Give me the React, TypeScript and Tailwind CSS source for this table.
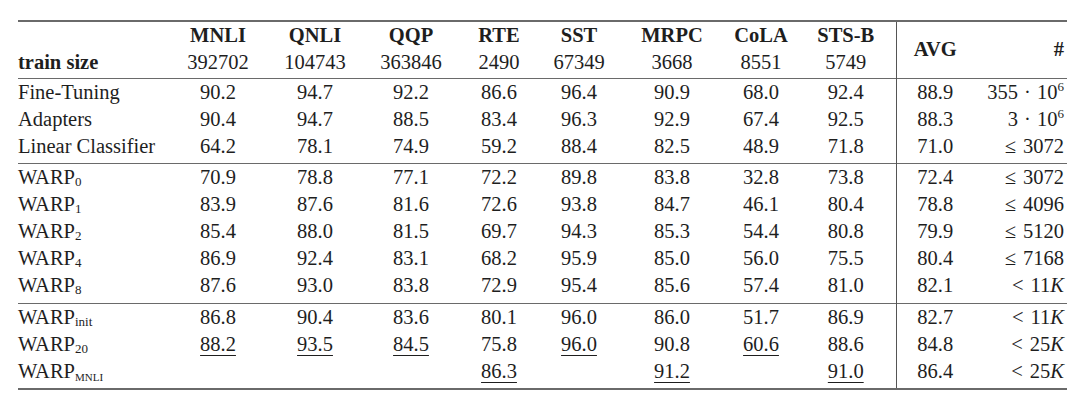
import type { ReactNode } from 'react'

interface Row { name: ReactNode; vals: string[]; avg: string; n: ReactNode }

const tasks = ['MNLI', 'QNLI', 'QQP', 'RTE', 'SST', 'MRPC', 'CoLA', 'STS-B']
const sizes = ['392702', '104743', '363846', '2490', '67349', '3668', '8551', '5749']

const Warp = ({ sub, small }: { sub: string; small?: boolean }) => (
  <>
    WARP
    <sub className={small ? 'text-[11px] -bottom-[3px]' : 'text-[13px] -bottom-[2px]'}>{sub}</sub>
  </>
)

const Le = ({ v }: { v: string }) => (
  <>
    <span className="mr-[7px]">≤</span>
    {v}
  </>
)

const Lt = ({ v }: { v: string }) => (
  <>
    <span className="mr-[7px]">&lt;</span>
    {v}
    <span className="italic">K</span>
  </>
)

const Pow = ({ b }: { b: string }) => (
  <>
    {b} <span className="mx-[1px]">·</span> 10
    <sup className="text-[13px] -top-[8px]">6</sup>
  </>
)

const groups: Row[][] = [
  [
    { name: 'Fine-Tuning', vals: ['90.2', '94.7', '92.2', '86.6', '96.4', '90.9', '68.0', '92.4'], avg: '88.9', n: <Pow b="355" /> },
    { name: 'Adapters', vals: ['90.4', '94.7', '88.5', '83.4', '96.3', '92.9', '67.4', '92.5'], avg: '88.3', n: <Pow b="3" /> },
    { name: 'Linear Classifier', vals: ['64.2', '78.1', '74.9', '59.2', '88.4', '82.5', '48.9', '71.8'], avg: '71.0', n: <Le v="3072" /> },
  ],
  [
    { name: <Warp sub="0" />, vals: ['70.9', '78.8', '77.1', '72.2', '89.8', '83.8', '32.8', '73.8'], avg: '72.4', n: <Le v="3072" /> },
    { name: <Warp sub="1" />, vals: ['83.9', '87.6', '81.6', '72.6', '93.8', '84.7', '46.1', '80.4'], avg: '78.8', n: <Le v="4096" /> },
    { name: <Warp sub="2" />, vals: ['85.4', '88.0', '81.5', '69.7', '94.3', '85.3', '54.4', '80.8'], avg: '79.9', n: <Le v="5120" /> },
    { name: <Warp sub="4" />, vals: ['86.9', '92.4', '83.1', '68.2', '95.9', '85.0', '56.0', '75.5'], avg: '80.4', n: <Le v="7168" /> },
    { name: <Warp sub="8" />, vals: ['87.6', '93.0', '83.8', '72.9', '95.4', '85.6', '57.4', '81.0'], avg: '82.1', n: <Lt v="11" /> },
  ],
  [
    { name: <Warp sub="init" />, vals: ['86.8', '90.4', '83.6', '80.1', '96.0', '86.0', '51.7', '86.9'], avg: '82.7', n: <Lt v="11" /> },
    { name: <Warp sub="20" />, vals: ['_88.2', '_93.5', '_84.5', '75.8', '_96.0', '90.8', '_60.6', '88.6'], avg: '84.8', n: <Lt v="25" /> },
    { name: <Warp sub="MNLI" small />, vals: ['', '', '', '_86.3', '', '_91.2', '', '_91.0'], avg: '86.4', n: <Lt v="25" /> },
  ],
]

const widths = ['w-[152px]', 'w-[96px]', 'w-[98px]', 'w-[94px]', 'w-[82px]', 'w-[78px]', 'w-[108px]', 'w-[70px]', 'w-[100px]', 'w-[78px]', 'w-[93px]']

function Val({ v }: { v: string }) {
  if (v.startsWith('_')) {
    return <span className="underline decoration-1 underline-offset-[4px]">{v.slice(1)}</span>
  }
  return <>{v}</>
}

export default function App() {
  return (
    <div className="w-[1080px] h-[409px] bg-white pt-[20px] pl-[18px] font-['Liberation_Serif',serif] text-[20.5px] text-[#1e1e1e]">
      <table className="table-fixed border-collapse w-[1049px]">
        <colgroup>
          {widths.map((w, i) => (
            <col key={i} className={w} />
          ))}
        </colgroup>
        <thead>
          <tr className="border-t-2 border-[#6a6a6a]">
            <th className="p-0" />
            {tasks.map((t) => (
              <th key={t} className="p-0 leading-[27px] font-bold text-center">{t}</th>
            ))}
            <th rowSpan={2} className="p-0 pb-[2px] font-bold text-center align-middle border-l border-[#555]">AVG</th>
            <th rowSpan={2} className="p-0 pb-[2px] pr-[3px] font-bold text-right align-middle">#</th>
          </tr>
          <tr>
            <th className="p-0 pb-[2px] leading-[27px] font-bold text-left">train size</th>
            {sizes.map((s) => (
              <td key={s} className="p-0 pb-[2px] leading-[27px] text-center">{s}</td>
            ))}
          </tr>
        </thead>
        {groups.map((g, gi) => (
          <tbody key={gi} className={gi === groups.length - 1 ? 'border-t border-b-2 border-[#6a6a6a]' : 'border-t border-[#6a6a6a]'}>
            {g.map((r, ri) => {
              const pad = ri === g.length - 1 ? (gi === 1 ? 'pb-[4px]' : 'pb-[3px]') : ''
              return (
                <tr key={ri}>
                  <td className={`p-0 leading-[27px] text-left whitespace-nowrap ${pad}`}>{r.name}</td>
                  {r.vals.map((v, vi) => (
                    <td key={vi} className={`p-0 leading-[27px] text-center ${pad}`}>
                      <Val v={v} />
                    </td>
                  ))}
                  <td className={`p-0 leading-[27px] text-center border-l border-[#555] ${pad}`}>{r.avg}</td>
                  <td className={`p-0 pr-[3px] leading-[27px] text-right whitespace-nowrap ${pad}`}>{r.n}</td>
                </tr>
              )
            })}
          </tbody>
        ))}
      </table>
    </div>
  )
}
